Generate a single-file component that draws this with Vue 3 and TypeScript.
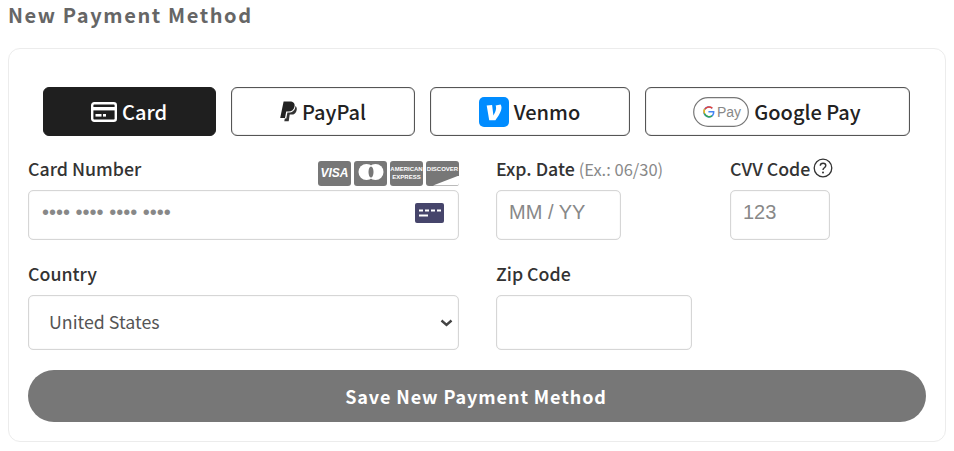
<script setup lang="ts">
const methods = ['Card', 'PayPal', 'Venmo', 'Google Pay']
const active = 'Card'
</script>

<template>
  <div class="page">
    <h2 class="title">New Payment Method</h2>
    <section class="panel">
      <div class="tabs">
        <button v-for="m in methods" :key="m" class="tab" :class="['tab-' + m.split(' ')[0].toLowerCase(), { active: m === active }]">
          <svg v-if="m === 'Card'" class="ic-card" viewBox="0 0 26 20" width="26" height="20">
            <rect x="1.2" y="1.2" width="23.6" height="17.6" rx="2" fill="none" stroke="#fff" stroke-width="2.4" />
            <rect x="1" y="5" width="24" height="3.4" fill="#fff" />
            <rect x="4.5" y="12" width="6" height="2.6" fill="#fff" />
            <rect x="12" y="12" width="3" height="2.6" fill="#fff" />
          </svg>
          <svg v-else-if="m === 'PayPal'" viewBox="0 0 18 21" width="18" height="21">
            <path d="M4.6 0.5h6.2c3.4 0 5.3 1.7 4.8 4.7-.6 3.6-2.9 5.4-6.2 5.4H7.2L6 17H1.2z" fill="#222" />
            <path d="M16.4 5c1.2.9 1.6 2.2 1.3 3.9-.5 3-2.5 4.7-5.4 4.7h-1.6l-1 6.6H5.3l.5-2.6h1.5l1.1-6h1.4c3.5 0 6-1.9 6.5-5.5z" fill="#333" />
          </svg>
          <svg v-else-if="m === 'Venmo'" viewBox="0 0 30 30" width="30" height="30">
            <rect width="30" height="30" rx="5" fill="#008cff" />
            <path d="M21.6 7.4c.6 1 .9 2 .9 3.2 0 4-3.4 9.100-6.100 12.700h-6.200L7.700 8.500l5.400-.5 1.300 10.400c1.200-2 2.700-5.100 2.700-7.200 0-1.200-.2-2-.5-2.600z" fill="#fff" />
          </svg>
          <svg v-else viewBox="0 0 56 30" width="56" height="30">
            <rect x="0.7" y="0.7" width="54.600" height="28.600" rx="14.300" fill="#fff" stroke="#777" stroke-width="1.200" />
            <path d="M15.400 14.700h5.300c.1 3-1.700 5.200-4.700 5.200a5 5 0 1 1 3.300-8.700" fill="none" stroke="#4285f4" stroke-width="1.500" />
            <path d="M12 12a5 5 0 0 1 7.300-.8" fill="none" stroke="#ea4335" stroke-width="1.500" />
            <path d="M11.500 12.200a5 5 0 0 0 0 4.400" fill="none" stroke="#fbbc04" stroke-width="1.500" />
            <path d="M11.500 16.600a5 5 0 0 0 7.500 2.300" fill="none" stroke="#34a853" stroke-width="1.500" />
            <text x="24" y="20" class="gp">Pay</text>
          </svg>
          <span>{{ m }}</span>
        </button>
      </div>

      <div class="row">
        <div class="field f-number">
          <div class="label-row">
            <label>Card Number</label>
            <div class="brands">
              <span class="brand visa">VISA</span>
              <span class="brand">
                <svg viewBox="0 0 32 24" width="32" height="24"><circle cx="11.500" cy="11" r="8" fill="#fff" /><circle cx="20.500" cy="11" r="8" fill="#fff" /><ellipse cx="16" cy="11" rx="2.500" ry="5.500" fill="#777" /></svg>
              </span>
              <span class="brand amex">AMERICAN<br />EXPRESS</span>
              <span class="brand discover">DISCOVER<i></i></span>
            </div>
          </div>
          <div class="input-wrap">
            <input class="input dots" type="text" placeholder="•••• •••• •••• ••••" />
            <svg class="mini-card" viewBox="0 0 29 20" width="29" height="20">
              <rect width="29" height="20" rx="2" fill="#46456b" />
              <path d="M4 7.500h4M10 7.500h4M16 7.500h4M22 7.500h4M4 12.500h9" stroke="#fff" stroke-width="2" />
            </svg>
          </div>
        </div>
        <div class="field f-exp">
          <div class="label-row"><label>Exp. Date <small>(Ex.: 06/30)</small></label></div>
          <input class="input arial" type="text" placeholder="MM / YY" />
        </div>
        <div class="field f-cvv">
          <div class="label-row">
            <label>CVV Code</label>
            <svg class="help" viewBox="0 0 20 20" width="20" height="20">
              <circle cx="10" cy="10" r="8.800" fill="none" stroke="#333" stroke-width="1.300" />
              <path d="M7.300 7.800c0-1.700 1.200-2.600 2.800-2.600s2.700.9 2.700 2.300c0 2.200-2.800 2.200-2.800 4.400" fill="none" stroke="#333" stroke-width="1.400" />
              <circle cx="10" cy="14.500" r="1" fill="#333" />
            </svg>
          </div>
          <input class="input arial" type="text" placeholder="123" />
        </div>
      </div>

      <div class="row row2">
        <div class="field f-number">
          <label class="label-row">Country</label>
          <div class="input-wrap">
            <select class="input select">
              <option>United States</option>
            </select>
            <svg class="chevron" viewBox="0 0 13 8" width="13" height="8">
              <path d="M1.500 1.500l5 4.500 5-4.500" fill="none" stroke="#444" stroke-width="2.400" />
            </svg>
          </div>
        </div>
        <div class="field f-zip">
          <label class="label-row">Zip Code</label>
          <input class="input tall" type="text" />
        </div>
      </div>

      <button class="save">Save New Payment Method</button>
    </section>
  </div>
</template>

<style>
html, body { margin: 0; background: #fff; }
</style>

<style scoped>
.page {
  width: 954px;
  height: 451px;
  box-sizing: border-box;
  padding: 0 8px;
  overflow: hidden;
  font-family: "Noto Sans CJK JP", "Noto Sans", sans-serif;
  color: #333;
}
.title {
  margin: 0 0 19px;
  font-size: 20px;
  line-height: 29px;
  font-weight: 700;
  letter-spacing: 1.600px;
  color: #666;
}
.panel {
  width: 938px;
  height: 394px;
  box-sizing: border-box;
  border: 1px solid #ececec;
  border-radius: 12px;
  padding: 38px 19px 0;
}
.tabs {
  display: flex;
  gap: 15px;
  margin-left: 15px;
  margin-bottom: 20px;
}
.tab {
  height: 49px;
  box-sizing: border-box;
  display: flex;
  align-items: center;
  justify-content: center;
  gap: 5px;
  padding: 0 1px 0 0;
  background: #fff;
  border: 1px solid #555;
  box-shadow: inset 0 0 1px #666;
  border-radius: 6px;
  font: 500 20px/1 "Noto Sans CJK JP", sans-serif;
  color: #222;
}
.tab-card { width: 173px; }
.tab-paypal { width: 184px; }
.tab-venmo { width: 200px; }
.tab-google { width: 265px; }
.tab.active { background: #1f1f1f; border-color: #1f1f1f; color: #fff; box-shadow: none; }
.gp { font: 500 14px "Liberation Sans", sans-serif; fill: #888; }
.row { display: flex; }
.row2 { margin-top: 21px; }
.field { display: flex; flex-direction: column; }
.f-number { width: 431px; margin-right: 37px; }
.f-exp { width: 234px; }
.f-exp .input { width: 125px; }
.f-cvv { width: 110px; }
.f-cvv .input { width: 100px; }
.f-zip { width: 196px; }
.label-row {
  display: flex;
  align-items: center;
  height: 24px;
  margin-bottom: 10px;
  font-size: 17.800px;
  font-weight: 500;
  color: #333;
  gap: 3px;
}
.f-number .label-row { justify-content: space-between; }
small { font-size: 16.500px; font-weight: 400; color: #888; }
.brands { display: flex; gap: 3px; margin-top: 10px; }
.brand {
  width: 33px;
  height: 25px;
  box-sizing: border-box;
  display: flex;
  align-items: center;
  justify-content: center;
  background: #777;
  border-radius: 3px;
  color: #fff;
  font: italic 700 12px "Liberation Sans", sans-serif;
  text-align: center;
  overflow: hidden;
  position: relative;
}
.amex { font: 700 6px/8px "Liberation Sans", sans-serif; }
.discover { font: 700 6px "Liberation Sans", sans-serif; padding-bottom: 8px; }
.discover i {
  position: absolute;
  right: 0;
  bottom: 0;
  width: 26px;
  height: 10px;
  background: #fff;
  clip-path: polygon(100% 0, 100% 100%, 0 100%);
}
.input-wrap { position: relative; }
.mini-card { position: absolute; right: 15px; top: 13px; }
.chevron { position: absolute; right: 6px; top: 24px; pointer-events: none; }
.input {
  display: block;
  width: 100%;
  height: 50px;
  box-sizing: border-box;
  border: 1px solid #d6d6d6;
  box-shadow: inset 0 0 1px #ccc;
  border-radius: 5px;
  background: #fff;
  padding: 0 12px 6px;
  font-size: 20px;
  font-family: "Noto Sans CJK JP", sans-serif;
  color: #555;
  outline: none;
}
.input::placeholder { color: #888; opacity: 1; }
.arial { font-family: "Liberation Sans", sans-serif; }
.dots { font-family: "Liberation Sans", sans-serif; padding-left: 13px; }
.select {
  height: 55px;
  padding: 0 0 4px 20px;
  font-size: 17.800px;
  color: #555;
  appearance: none;
}
.tall { height: 55px; }
.save {
  display: block;
  width: 898px;
  height: 52px;
  margin-top: 20px;
  border: 0;
  border-radius: 26px;
  background: #777;
  color: #fff;
  padding: 0 2px 0 0;
  font: 700 18px "Noto Sans CJK JP", sans-serif;
  letter-spacing: 0.900px;
}
</style>
